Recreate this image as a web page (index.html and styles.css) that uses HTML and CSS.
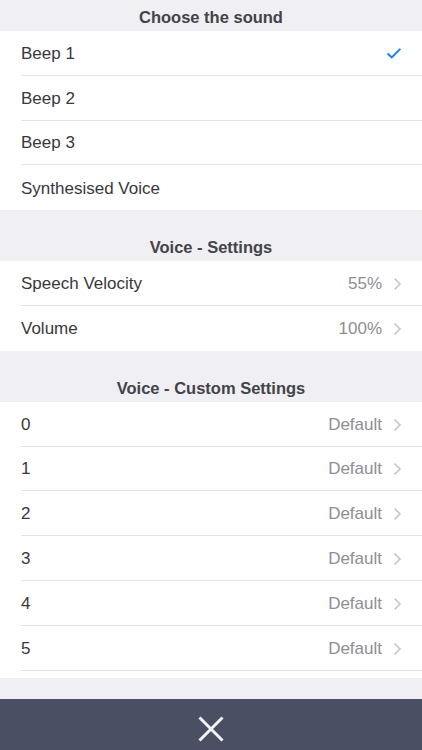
FILE: index.html
```html
<!DOCTYPE html>
<html>
<head>
<meta charset="utf-8">
<link rel="stylesheet" href="styles.css">
</head>
<body>
<div class="page">
  <div class="content">
    <div class="hdr first">Choose the sound</div>
    <div class="list">
      <div class="row"><div class="cell"><span class="label">Beep 1</span>
        <svg class="check" width="14" height="11" viewBox="0 0 14 11"><path d="M1.2 6 L4.8 9.4 L12.8 1.4" fill="none" stroke="#1c7ee0" stroke-width="2" stroke-linecap="round" stroke-linejoin="round"/></svg>
      </div></div>
      <div class="row"><div class="cell"><span class="label">Beep 2</span></div></div>
      <div class="row"><div class="cell"><span class="label">Beep 3</span></div></div>
      <div class="row"><div class="cell"><span class="label">Synthesised Voice</span></div></div>
    </div>

    <div class="hdr">Voice - Settings</div>
    <div class="list">
      <div class="row"><div class="cell"><span class="label">Speech Velocity</span><span class="value">55%</span>
        <svg class="chev" width="9" height="14" viewBox="0 0 9 14"><path d="M1.5 1.5 L7 7 L1.5 12.5" fill="none" stroke="#c4c4c9" stroke-width="1.6"/></svg></div></div>
      <div class="row"><div class="cell"><span class="label">Volume</span><span class="value">100%</span>
        <svg class="chev" width="9" height="14" viewBox="0 0 9 14"><path d="M1.5 1.5 L7 7 L1.5 12.5" fill="none" stroke="#c4c4c9" stroke-width="1.6"/></svg></div></div>
    </div>

    <div class="hdr">Voice - Custom Settings</div>
    <div class="list tail">
      <div class="row"><div class="cell"><span class="label">0</span><span class="value">Default</span>
        <svg class="chev" width="9" height="14" viewBox="0 0 9 14"><path d="M1.5 1.5 L7 7 L1.5 12.5" fill="none" stroke="#c4c4c9" stroke-width="1.6"/></svg></div></div>
      <div class="row"><div class="cell"><span class="label">1</span><span class="value">Default</span>
        <svg class="chev" width="9" height="14" viewBox="0 0 9 14"><path d="M1.5 1.5 L7 7 L1.5 12.5" fill="none" stroke="#c4c4c9" stroke-width="1.6"/></svg></div></div>
      <div class="row"><div class="cell"><span class="label">2</span><span class="value">Default</span>
        <svg class="chev" width="9" height="14" viewBox="0 0 9 14"><path d="M1.5 1.5 L7 7 L1.5 12.5" fill="none" stroke="#c4c4c9" stroke-width="1.6"/></svg></div></div>
      <div class="row"><div class="cell"><span class="label">3</span><span class="value">Default</span>
        <svg class="chev" width="9" height="14" viewBox="0 0 9 14"><path d="M1.5 1.5 L7 7 L1.5 12.5" fill="none" stroke="#c4c4c9" stroke-width="1.6"/></svg></div></div>
      <div class="row"><div class="cell"><span class="label">4</span><span class="value">Default</span>
        <svg class="chev" width="9" height="14" viewBox="0 0 9 14"><path d="M1.5 1.5 L7 7 L1.5 12.5" fill="none" stroke="#c4c4c9" stroke-width="1.6"/></svg></div></div>
      <div class="row"><div class="cell"><span class="label">5</span><span class="value">Default</span>
        <svg class="chev" width="9" height="14" viewBox="0 0 9 14"><path d="M1.5 1.5 L7 7 L1.5 12.5" fill="none" stroke="#c4c4c9" stroke-width="1.6"/></svg></div></div>
    </div>
  </div>
  <div class="footer">
    <svg width="26" height="26" viewBox="0 0 26 26"><path d="M1.5 1.5 L24.5 24.5 M24.5 1.5 L1.5 24.5" stroke="#f4f4f6" stroke-width="3" stroke-linecap="butt"/></svg>
  </div>
</div>
</body>
</html>
```

FILE: styles.css
```css
html, body {
  margin: 0;
  padding: 0;
}
body {
  background: #efeff4;
  font-family: "Liberation Sans", Arial, sans-serif;
  color: #333336;
}
.page {
  width: 422px;
  height: 750px;
  display: flex;
  flex-direction: column;
  overflow: hidden;
}
.content {
  flex: 1;
  overflow: hidden;
}
.hdr {
  height: 51px;
  box-sizing: border-box;
  padding-top: 27px;
  line-height: 20px;
  text-align: center;
  font-size: 16.5px;
  font-weight: bold;
  color: #434348;
}
.hdr.first {
  height: 31px;
  padding-top: 7px;
}
.list {
  background: #fff;
}
.list.tail {
  padding-bottom: 7px;
}
.row {
  padding-left: 21px;
  height: 44.8px;
}
.cell {
  height: 100%;
  box-sizing: border-box;
  display: flex;
  align-items: center;
  padding-top: 2px;
  padding-right: 20px;
  border-bottom: 1px solid #e3e3e6;
}
.list .row:last-child .cell {
  border-bottom: none;
}
.list.tail .row:last-child .cell {
  border-bottom: 1px solid #e3e3e6;
}
.label {
  flex: 1;
  font-size: 17px;
  color: #38383c;
}
.value {
  font-size: 17px;
  color: #8e8e93;
  margin-right: 11px;
}
.check {
  margin-right: 1px;
}
.chev {
  display: block;
}
.footer {
  height: 51.5px;
  box-sizing: border-box;
  padding-top: 9px;
  background: #4a4f63;
  display: flex;
  align-items: center;
  justify-content: center;
}
.footer svg {
  display: block;
}
```
